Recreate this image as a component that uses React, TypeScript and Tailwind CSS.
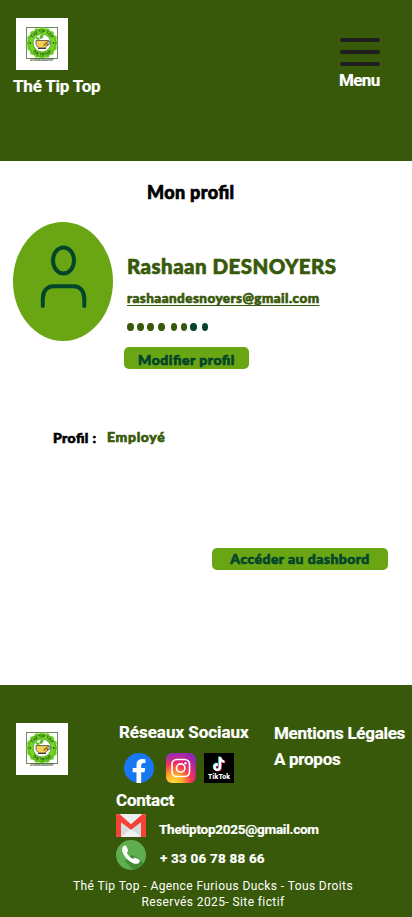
import React from "react";

const display = "font-['Roboto','Liberation_Sans',sans-serif] font-bold text-white whitespace-nowrap [-webkit-text-stroke:0.2px_currentColor]";
const heavy = "font-['Lato','Noto_Sans',sans-serif] font-black whitespace-nowrap [-webkit-text-stroke:0.65px_currentColor] [font-feature-settings:'liga'_1]";

function Logo({ id }: { id: string }) {
  const scallops = Array.from({ length: 16 }, (_, i) => (i * Math.PI) / 8);
  return (
    <svg className="block size-[52px] shrink-0 bg-white" viewBox="0 0 52 52">
      <rect x="10.5" y="9.5" width="31" height="31" fill="#fff" stroke="#71875f" />
      {scallops.map((a) => (
        <circle key={a} cx={26 + 12.7 * Math.cos(a)} cy={25 + 12.7 * Math.sin(a)} r="3" fill="#70d321" />
      ))}
      <circle cx="26" cy="25" r="14" fill="#72d626" />
      <circle cx="26" cy="25" r="13.700" fill="none" stroke="#438b20" strokeWidth=".5" />
      <circle cx="26" cy="25" r="8.900" fill="#fff" stroke="#479319" strokeWidth=".7" />
      <path id={`${id}-top`} d="M15.700 25a10.300 10.300 0 0 1 20.600 0" fill="none" />
      <path id={`${id}-bottom`} d="M13.200 25a12.800 12.800 0 0 0 25.600 0" fill="none" />
      <g fill="#204914" fontFamily="Roboto, sans-serif" fontSize="3.800" fontWeight="700" textAnchor="middle">
        <text><textPath href={`#${id}-top`} startOffset="50%">THÉ TIP TOP</textPath></text>
        <text><textPath href={`#${id}-bottom`} startOffset="50%">THÉ TIPTOP</textPath></text>
      </g>
      <path d="M20 22.500h12v2.500c0 4-3 5-6 5S20 29 20 25Z" fill="#f4ce59" stroke="#4d4b3b" strokeWidth=".8" />
      <path d="M32 23c3-1 3 4-1 4M22 30.500h8" fill="none" stroke="#393c35" strokeWidth="1" />
      <path d="M27 27l3-3 1.500-.5-1 3-2 1.500Z" fill="#a87916" />
      <path d="M23.500 22c-3 0-4-1-3.500-3 2 0 3.500 1 3.500 3Zm0-1c-.5-3 1-4.500 4-4.500 0 3-1 4.500-4 4.500Z" fill="#54bb22" />
      <circle cx="14.300" cy="25" r=".9" fill="#315b1c" />
      <circle cx="37.700" cy="25" r=".9" fill="#315b1c" />
      <text x="26" y="43.300" fontSize="2.700" fontWeight="700" fontFamily="Roboto, sans-serif" textAnchor="middle" fill="#40542e">AYURAROMASHOP</text>
    </svg>
  );
}

function Avatar() {
  return (
    <svg className="block h-[119px] w-[100px] shrink-0" viewBox="0 0 100 119">
      <ellipse cx="50" cy="59.500" rx="50" ry="59.500" fill="#6aa614" />
      <g fill="none" stroke="#03452a" strokeWidth="4" strokeLinecap="round">
        <ellipse cx="50.500" cy="38.500" rx="10.500" ry="13" />
        <path d="M29.800 84v-7c0-7.500 4-12.700 10.500-12.700h20.500c6.500 0 10.500 5.200 10.500 12.700v7" />
      </g>
    </svg>
  );
}

function Facebook() {
  return (
    <svg className="size-[30px] shrink-0" viewBox="0 0 30 30">
      <circle cx="15" cy="15" r="15" fill="#1877f2" />
      <path d="M12.500 30V19.300H8.700V15h3.800v-3.200c0-3.800 2.200-5.800 5.700-5.800 1.600 0 3.200.3 3.200.3V10h-1.800c-1.900 0-2.400 1.100-2.400 2.300V15h4l-.7 4.300h-3.300V30a15 15 0 0 1-4.700 0Z" fill="#fff" />
    </svg>
  );
}

function Instagram() {
  return (
    <svg className="size-[30px] shrink-0" viewBox="0 0 30 30">
      <defs>
        <linearGradient id="ig-base" x1="0" y1="0" x2="1" y2="1">
          <stop stopColor="#7e35cb" /><stop offset=".5" stopColor="#dc2785" /><stop offset="1" stopColor="#b829b4" />
        </linearGradient>
        <radialGradient id="ig-warm" cx=".25" cy="1" r=".95">
          <stop stopColor="#ffdf32" /><stop offset=".3" stopColor="#ffb027" /><stop offset=".65" stopColor="#f6364d" /><stop offset="1" stopColor="#e0247d" stopOpacity="0" />
        </radialGradient>
        <linearGradient id="ig-violet" x1="1" y1="0" x2=".4" y2=".6">
          <stop stopColor="#7527c5" /><stop offset="1" stopColor="#c720a0" stopOpacity="0" />
        </linearGradient>
      </defs>
      <rect width="29.500" height="30" rx="6" fill="url(#ig-base)" />
      <rect width="29.500" height="30" rx="6" fill="url(#ig-violet)" />
      <rect width="29.500" height="30" rx="6" fill="url(#ig-warm)" />
      <g fill="none" stroke="#fff" strokeWidth="1.700">
        <rect x="6" y="6.500" width="17.500" height="17" rx="4.800" />
        <circle cx="14.700" cy="15" r="4.200" />
      </g>
      <circle cx="19.500" cy="10.300" r="1.200" fill="#fff" />
    </svg>
  );
}

function TikTok() {
  const note = "M14.500 4h2.300c.2 2 1.300 3.100 3.200 3.300v2.400c-1.200 0-2.200-.3-3.200-1v5.200c0 2.600-1.800 4.100-3.900 4.100-2.300 0-3.900-1.700-3.900-3.900 0-2.500 2-4.200 4.500-3.900v2.400c-1.200-.3-2.100.4-2.100 1.500 0 .9.700 1.600 1.500 1.600 1 0 1.600-.7 1.600-1.800Z";
  return (
    <svg className="size-[30px] shrink-0 bg-black" viewBox="0 0 30 30">
      <path d={note} fill="#25f4ee" transform="translate(-.3 -.4)" />
      <path d={note} fill="#fe2c55" transform="translate(1.100 .6)" />
      <path d={note} fill="#fff" transform="translate(.4 .1)" />
      <text x="15" y="25.700" fill="#fff" fontFamily="Roboto, sans-serif" fontWeight="900" fontSize="6.800" textAnchor="middle" textLength="22">TikTok</text>
    </svg>
  );
}

function Gmail() {
  return (
    <svg className="h-[23px] w-[30px] shrink-0" viewBox="0 0 30 23">
      <rect width="30" height="23" rx="2" fill="#e4e7e8" />
      <path d="M5 23V8l10 7 10-7v15Z" fill="#d7dcde" />
      <path d="M5 23l10-8 10 8Z" fill="#f1f1f1" />
      <path d="M2 0 15 10.500 28 0Z" fill="#eceff0" />
      <path d="M0 2C0 .8.800 0 2 0h1.500L15 10.200 26.500 0H28c1.200 0 2 .8 2 2v19c0 1.200-.8 2-2 2h-3V8.200l-10 7.500L5 8.200V23H2c-1.200 0-2-.8-2-2Z" fill="#f44336" />
    </svg>
  );
}

function Phone() {
  return (
    <svg className="size-[30px] shrink-0" viewBox="0 0 30 30">
      <circle cx="15" cy="15" r="15" fill="#5fae4d" />
      <path d="M23 19l4.500 4.300C25 27 21 29.500 17 29.800L9 21l7-6Z" fill="#448b36" />
      <path d="M7.200 6.300c1.500-1.300 3-.8 3.500.6l1.200 3.200c.4 1-.1 1.700-1.200 2.500 1.400 3 3.400 5.100 6.300 6.500.8-1.200 1.500-1.700 2.600-1.200l3 1.300c1.500.7 1.700 2.100.4 3.500-1.700 1.800-4.500 1.500-8.300-.7-3.700-2.200-6.500-5.700-8-9.500-1-2.500-.8-4.700.5-6.200Z" fill="#fff" />
    </svg>
  );
}

function Header() {
  return (
    <header className="flex h-[161px] items-start justify-between bg-[#38590a] pr-8 pl-[13px]">
      <div className="pt-[18px]">
        <div className="pl-[3px]"><Logo id="header-logo" /></div>
        <p className={`${display} mt-1.5 text-[17px] leading-5 tracking-[-0.2px]`}>Thé Tip Top</p>
      </div>
      <button className="flex w-[41px] flex-col items-start pt-[38px]">
        <span className="ml-px flex w-10 flex-col gap-2">
          <span className="h-1 rounded-full bg-[#1e1e1e]" />
          <span className="h-1 rounded-full bg-[#1e1e1e]" />
          <span className="h-1 rounded-full bg-[#1e1e1e]" />
        </span>
        <span className={`${display} mt-1 text-[17px] leading-5 tracking-[-0.600px]`}>Menu</span>
      </button>
    </header>
  );
}

function Profile() {
  return (
    <main className="h-[524px] bg-white pt-[19px]">
      <h1 className={`${heavy} pl-[147px] text-[18px] leading-6 tracking-[0.350px] text-black`}>Mon profil</h1>
      <section className="mt-[18px] flex pl-[13px]">
        <Avatar />
        <div className="flex flex-col items-start pt-[30px] pl-[11px]">
          <h2 className={`${heavy} pl-[3px] text-[20.500px] leading-7 tracking-[0.450px] text-[#38590a]`}>Rashaan DESNOYERS</h2>
          <a className={`${heavy} mt-[9px] ml-[3px] text-[13.500px] leading-[18px] tracking-[0.440px] text-[#38590a] underline decoration-1 underline-offset-2`}>rashaandesnoyers@gmail.com</a>
          <div className="mt-4 flex h-2 pl-[3px] [&>span]:h-2 [&>span]:w-[6.500px] [&>span]:rounded-[50%]">
            <span className="bg-[#38590a]" />
            <span className="ml-[3.500px] bg-[#38590a]" />
            <span className="ml-[3.500px] bg-[#38590a]" />
            <span className="ml-[4.500px] bg-[#38590a]" />
            <span className="ml-[6px] bg-[#38590a]" />
            <span className="ml-[3.500px] bg-[#38590a]" />
            <span className="ml-[3px] bg-[#03452a]" />
            <span className="ml-[5px] bg-[#03452a]" />
          </div>
          <button className={`${heavy} mt-4 h-[22px] w-[125px] rounded-[5px] bg-[#6aa614] pt-1 text-[14px] leading-[18px] tracking-[0.500px] text-[#03452a]`}>Modifier profil</button>
        </div>
      </section>
      <dl className={`${heavy} mt-[59px] flex pl-[53px] text-[14px] leading-[18px]`}>
        <dt className="w-[54px] pt-px tracking-[0.400px] text-black">Profil :</dt>
        <dd className="tracking-[0.650px] text-[#38590a]">Employé</dd>
      </dl>
      <div className="mt-[101px] flex justify-end pr-6">
        <button className={`${heavy} h-[22px] w-44 rounded-[5px] bg-[#6aa614] text-[14px] leading-[22px] tracking-[0.430px] text-[#03452a]`}>Accéder au dashbord</button>
      </div>
    </main>
  );
}

function Footer() {
  return (
    <footer className="h-[232px] bg-[#38590a] pt-[38px]">
      <div className="flex h-[155px] items-start pl-4">
        <Logo id="footer-logo" />
        <div className="w-[158px] shrink-0 pl-12">
          <h3 className={`${display} -mt-px pl-[3px] text-[17px] leading-5 tracking-[-0.030px]`}>Réseaux Sociaux</h3>
          <div className="mt-[11px] flex pl-2">
            <Facebook />
            <div className="ml-3 shrink-0"><Instagram /></div>
            <div className="ml-2 shrink-0"><TikTok /></div>
          </div>
          <h3 className={`${display} mt-[7px] text-[17px] leading-5 tracking-[-0.230px]`}>Contact</h3>
          <div className="mt-1 flex items-start gap-[13px]">
            <Gmail />
            <span className={`${display} pt-[7px] text-[13.500px] leading-4 tracking-[-0.260px]`}>Thetiptop2025@gmail.com</span>
          </div>
          <div className="mt-[3px] flex items-start gap-3.5">
            <Phone />
            <span className={`${display} pt-2.5 text-[13.500px] leading-4 tracking-[0.200px]`}>+ 33 06 78 88 66</span>
          </div>
        </div>
        <nav className={`${display} flex flex-col gap-1.5 pl-12 text-[17px] leading-5 tracking-[-0.280px]`}>
          <a>Mentions Légales</a>
          <a>A propos</a>
        </nav>
      </div>
      <p className="pl-[14px] text-center font-['Roboto',sans-serif] text-[12px] leading-4 tracking-[0.400px] text-white">
        Thé Tip Top - Agence Furious Ducks - Tous Droits<br />Reservés 2025- Site fictif
      </p>
    </footer>
  );
}

export default function App() {
  return (
    <div className="h-[917px] w-[412px] overflow-hidden">
      <Header />
      <Profile />
      <Footer />
    </div>
  );
}
